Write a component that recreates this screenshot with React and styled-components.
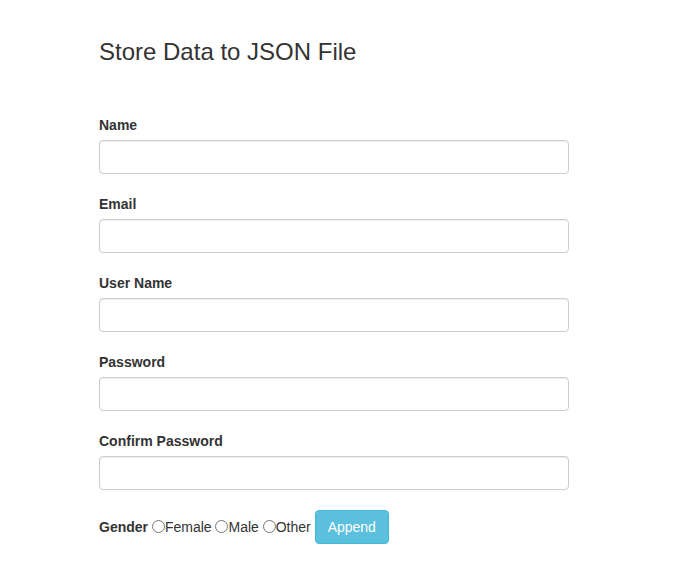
import React, { useState } from 'react';
import styled, { createGlobalStyle } from 'styled-components';

const GlobalStyle = createGlobalStyle`
  html, body {
    margin: 0;
    padding: 0;
    background: #ffffff;
  }
  body {
    font-family: "Liberation Sans", Arial, Helvetica, sans-serif;
    font-size: 14px;
    line-height: 1.42857143;
    color: #333333;
  }
  * {
    box-sizing: border-box;
  }
`;

const fields = [
  { id: 'name', label: 'Name', type: 'text' },
  { id: 'email', label: 'Email', type: 'email' },
  { id: 'username', label: 'User Name', type: 'text' },
  { id: 'password', label: 'Password', type: 'password' },
  { id: 'confirm', label: 'Confirm Password', type: 'password' },
];

export default function App() {
  const [gender, setGender] = useState('');

  return (
    <>
      <GlobalStyle />
      <Stcontainer>
        <Sttitle>Store Data to JSON File</Sttitle>
        <Stform onSubmit={(e) => e.preventDefault()}>
          {fields.map((f) => (
            <StformGroup key={f.id}>
              <Stlabel htmlFor={f.id}>{f.label}</Stlabel>
              <Stinput id={f.id} name={f.id} type={f.type} />
            </StformGroup>
          ))}
          <StgenderRow>
            <StinlineLabel>Gender</StinlineLabel>{' '}
            <Stradio
              type="radio"
              name="gender"
              value="female"
              checked={gender === 'female'}
              onChange={() => setGender('female')}
            />
            Female{' '}
            <Stradio
              type="radio"
              name="gender"
              value="male"
              checked={gender === 'male'}
              onChange={() => setGender('male')}
            />
            Male{' '}
            <Stradio
              type="radio"
              name="gender"
              value="other"
              checked={gender === 'other'}
              onChange={() => setGender('other')}
            />
            Other{' '}
            <Stbutton type="submit">Append</Stbutton>
          </StgenderRow>
        </Stform>
      </Stcontainer>
    </>
  );
}

const Stcontainer = styled.div`
  padding: 39px 0 0 99px;
  width: 569px;
`;

const Sttitle = styled.h3`
  margin: 0 0 50px;
  font-family: "Liberation Sans", Arial, Helvetica, sans-serif;
  font-size: 24px;
  font-weight: 500;
  line-height: 1.1;
  color: #333333;
`;

const Stform = styled.form`
  width: 470px;
`;

const StformGroup = styled.div`
  margin-bottom: 20px;
`;

const Stlabel = styled.label`
  display: inline-block;
  max-width: 100%;
  margin-bottom: 5px;
  font-weight: 700;
`;

const StinlineLabel = styled.label`
  font-weight: 700;
`;

const Stinput = styled.input`
  display: block;
  width: 100%;
  height: 34px;
  padding: 6px 12px;
  font-size: 14px;
  line-height: 1.42857143;
  color: #555555;
  background-color: #ffffff;
  border: 1px solid #cccccc;
  border-radius: 4px;
  box-shadow: inset 0 1px 1px rgba(0, 0, 0, 0.075);
  font-family: inherit;
  &:focus {
    border-color: #66afe9;
    outline: 0;
    box-shadow: inset 0 1px 1px rgba(0, 0, 0, 0.075), 0 0 8px rgba(102, 175, 233, 0.6);
  }
`;

const StgenderRow = styled.div`
  line-height: 34px;
`;

const Stradio = styled.input`
  margin: 4px 0 0;
  width: 13px;
  height: 13px;
  vertical-align: -1px;
`;

const Stbutton = styled.button`
  display: inline-block;
  height: 34px;
  padding: 6px 12px;
  font-family: inherit;
  font-size: 14px;
  line-height: 1.42857143;
  color: #ffffff;
  background-color: #5bc0de;
  border: 1px solid #46b8da;
  border-radius: 4px;
  vertical-align: baseline;
  cursor: pointer;
  &:hover {
    background-color: #31b0d5;
    border-color: #269abc;
  }
`;
